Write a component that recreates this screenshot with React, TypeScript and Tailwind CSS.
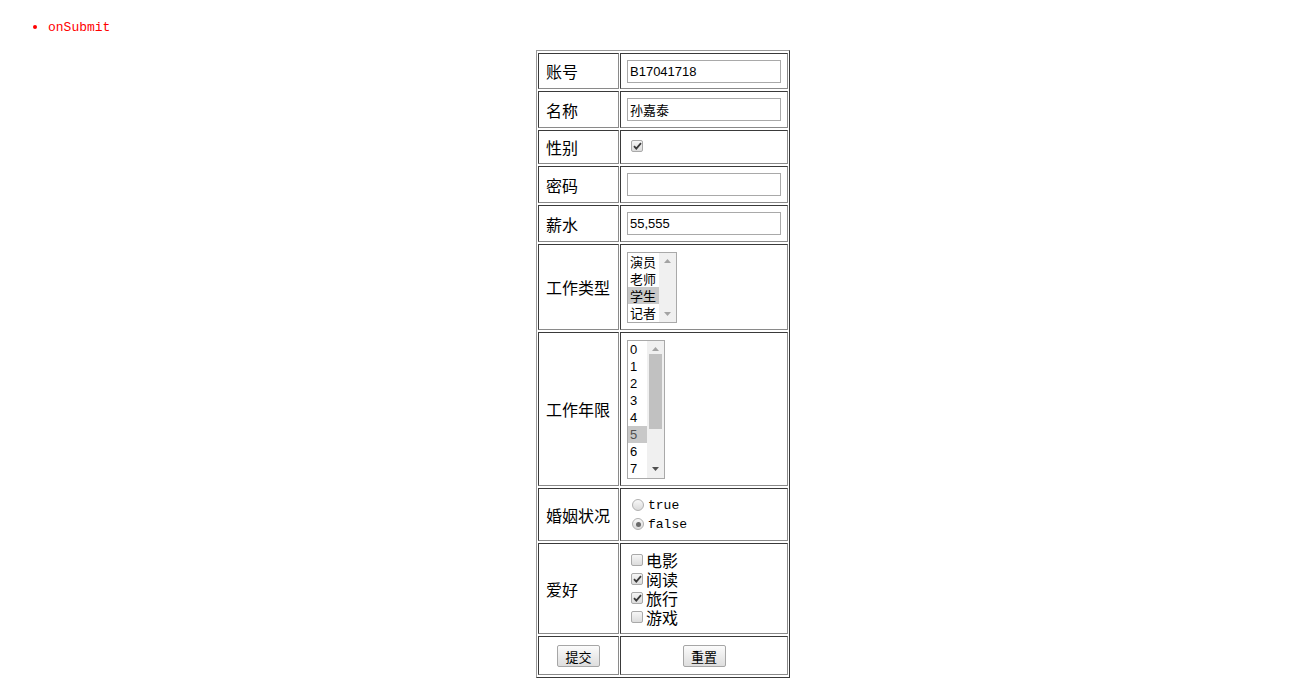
import React from 'react';

const Check: React.FC<{ checked?: boolean }> = ({ checked }) => (
  <span className="inline-flex h-[12px] w-[12px] shrink-0 items-center justify-center rounded-[2px] border border-[#a9a9a9] bg-gradient-to-b from-[#f6f6f6] to-[#dcdcdc]">
    {checked && (
      <svg width="9" height="8" viewBox="0 0 9 8">
        <path d="M1 4.2 L3.3 6.6 L8 1.2" fill="none" stroke="#3a3a3a" strokeWidth="1.8" />
      </svg>
    )}
  </span>
);

const Radio: React.FC<{ checked?: boolean }> = ({ checked }) => (
  <span className="inline-flex h-[12px] w-[12px] shrink-0 items-center justify-center rounded-full border border-[#b0b0b0] bg-gradient-to-b from-[#f8f8f8] to-[#dadada]">
    {checked && <span className="h-[5px] w-[5px] rounded-full bg-[#6a6a6a]" />}
  </span>
);

const ArrowUp = () => (
  <svg width="7" height="4" viewBox="0 0 7 4"><path d="M0 4 L3.5 0 L7 4Z" fill="#a3a3a3" /></svg>
);
const ArrowDown: React.FC<{ dark?: boolean }> = ({ dark }) => (
  <svg width="7" height="4" viewBox="0 0 7 4"><path d="M0 0 L3.5 4 L7 0Z" fill={dark ? '#505050' : '#a3a3a3'} /></svg>
);

const cjk = "font-['Noto_Sans_CJK_SC',sans-serif]";
const arial = "font-['Liberation_Sans',Arial,sans-serif]";
const mono = "font-['Liberation_Mono',monospace]";

const Label: React.FC<{ children: React.ReactNode; h: number }> = ({ children, h }) => (
  <td
    className={`w-[81px] border border-t-[#3a3a3a] border-l-[#3a3a3a] border-r-[#8a8a8a] border-b-[#8a8a8a] px-[7px] text-[16px] text-black ${cjk}`}
    style={{ height: h }}
  >
    {children}
  </td>
);

const Value: React.FC<{ children: React.ReactNode; className?: string }> = ({ children, className = '' }) => (
  <td className={`w-[168px] border border-t-[#3a3a3a] border-l-[#3a3a3a] border-r-[#8a8a8a] border-b-[#8a8a8a] pl-[6px] ${className}`}>
    {children}
  </td>
);

const TextBox: React.FC<{ value?: string; font?: string }> = ({ value = '', font = arial }) => (
  <div className={`flex h-[23px] w-[154px] items-center border border-[#a9a9a9] bg-white px-[2px] text-[13px] leading-none text-black ${font}`}>
    {value}
  </div>
);

const Btn: React.FC<{ label: string }> = ({ label }) => (
  <button className={`h-[22px] w-[43px] rounded-[2px] border border-[#a6a6a6] bg-gradient-to-b from-[#fbfbfb] to-[#dedede] text-[13px] leading-none text-black ${cjk}`}>
    {label}
  </button>
);

export default function App() {
  const jobs = ['演员', '老师', '学生', '记者'];
  const years = ['0', '1', '2', '3', '4', '5', '6', '7'];
  const hobbies: [string, boolean][] = [['电影', false], ['阅读', true], ['旅行', true], ['游戏', false]];

  return (
    <div className="min-h-screen bg-white">
      <ul className={`mb-[13px] mt-[18px] list-disc pl-[48px] text-[13px] leading-[18px] text-[#ff0000] marker:text-[16px] ${mono}`}>
        <li>onSubmit</li>
      </ul>

      <div className="flex justify-center pl-[18px]">
        <table className="border-separate border-spacing-x-[1px] border-spacing-y-[2px] border border-t-[#9a9a9a] border-l-[#9a9a9a] border-r-[#3a3a3a] border-b-[#3a3a3a]">
          <tbody>
            <tr>
              <Label h={36}>账号</Label>
              <Value><TextBox value="B17041718" /></Value>
            </tr>
            <tr>
              <Label h={37}>名称</Label>
              <Value><TextBox value="孙嘉泰" font={cjk} /></Value>
            </tr>
            <tr>
              <Label h={34}>性别</Label>
              <Value className="pl-[10px]"><div className="-mt-[3px] flex"><Check checked /></div></Value>
            </tr>
            <tr>
              <Label h={37}>密码</Label>
              <Value><TextBox /></Value>
            </tr>
            <tr>
              <Label h={37}>薪水</Label>
              <Value><TextBox value="55,555" /></Value>
            </tr>
            <tr>
              <Label h={86}>工作类型</Label>
              <Value>
                <div className="flex h-[71px] w-[50px] border border-[#a9a9a9] bg-white">
                  <div className={`flex w-[31px] flex-col text-[13px] leading-[17px] text-black ${cjk}`}>
                    {jobs.map((j) => (
                      <div key={j} className={`pl-[2px] ${j === '学生' ? 'bg-[#c8c8c8]' : ''}`}>{j}</div>
                    ))}
                  </div>
                  <div className="flex w-[17px] flex-col items-center justify-between bg-[#f0f0f0] py-[6px]">
                    <ArrowUp />
                    <ArrowDown />
                  </div>
                </div>
              </Value>
            </tr>
            <tr>
              <Label h={154}>工作年限</Label>
              <Value>
                <div className="flex h-[139px] w-[38px] border border-[#a9a9a9] bg-white">
                  <div className={`flex w-[19px] flex-col text-[13px] leading-[17px] text-black ${arial}`}>
                    {years.map((y) => (
                      <div key={y} className={`pl-[2px] ${y === '5' ? 'bg-[#c8c8c8] text-[#505050]' : ''}`}>{y}</div>
                    ))}
                  </div>
                  <div className="flex w-[17px] flex-col items-center bg-[#f0f0f0] pb-[7px] pt-[6px]">
                    <ArrowUp />
                    <div className="mt-[3px] h-[75px] w-[13px] bg-[#c1c1c1]" />
                    <div className="flex-1" />
                    <ArrowDown dark />
                  </div>
                </div>
              </Value>
            </tr>
            <tr>
              <Label h={53}>婚姻状况</Label>
              <Value className="pl-[11px]">
                <div className={`flex flex-col text-[13px] leading-[19px] text-black ${mono}`}>
                  <div className="flex items-center gap-[4px]"><Radio />true</div>
                  <div className="flex items-center gap-[4px]"><Radio checked />false</div>
                </div>
              </Value>
            </tr>
            <tr>
              <Label h={91}>爱好</Label>
              <Value className="pl-[10px]">
                <div className={`flex flex-col text-[16px] leading-[19px] text-black ${cjk}`}>
                  {hobbies.map(([h, c]) => (
                    <div key={h} className="flex h-[19px] items-center gap-[3px]"><Check checked={c} /><span className="leading-none">{h}</span></div>
                  ))}
                </div>
              </Value>
            </tr>
            <tr>
              <td className="h-[39px] border border-t-[#3a3a3a] border-l-[#3a3a3a] border-r-[#8a8a8a] border-b-[#8a8a8a] text-center">
                <Btn label="提交" />
              </td>
              <td className="border border-t-[#3a3a3a] border-l-[#3a3a3a] border-r-[#8a8a8a] border-b-[#8a8a8a] text-center">
                <Btn label="重置" />
              </td>
            </tr>
          </tbody>
        </table>
      </div>
    </div>
  );
}
